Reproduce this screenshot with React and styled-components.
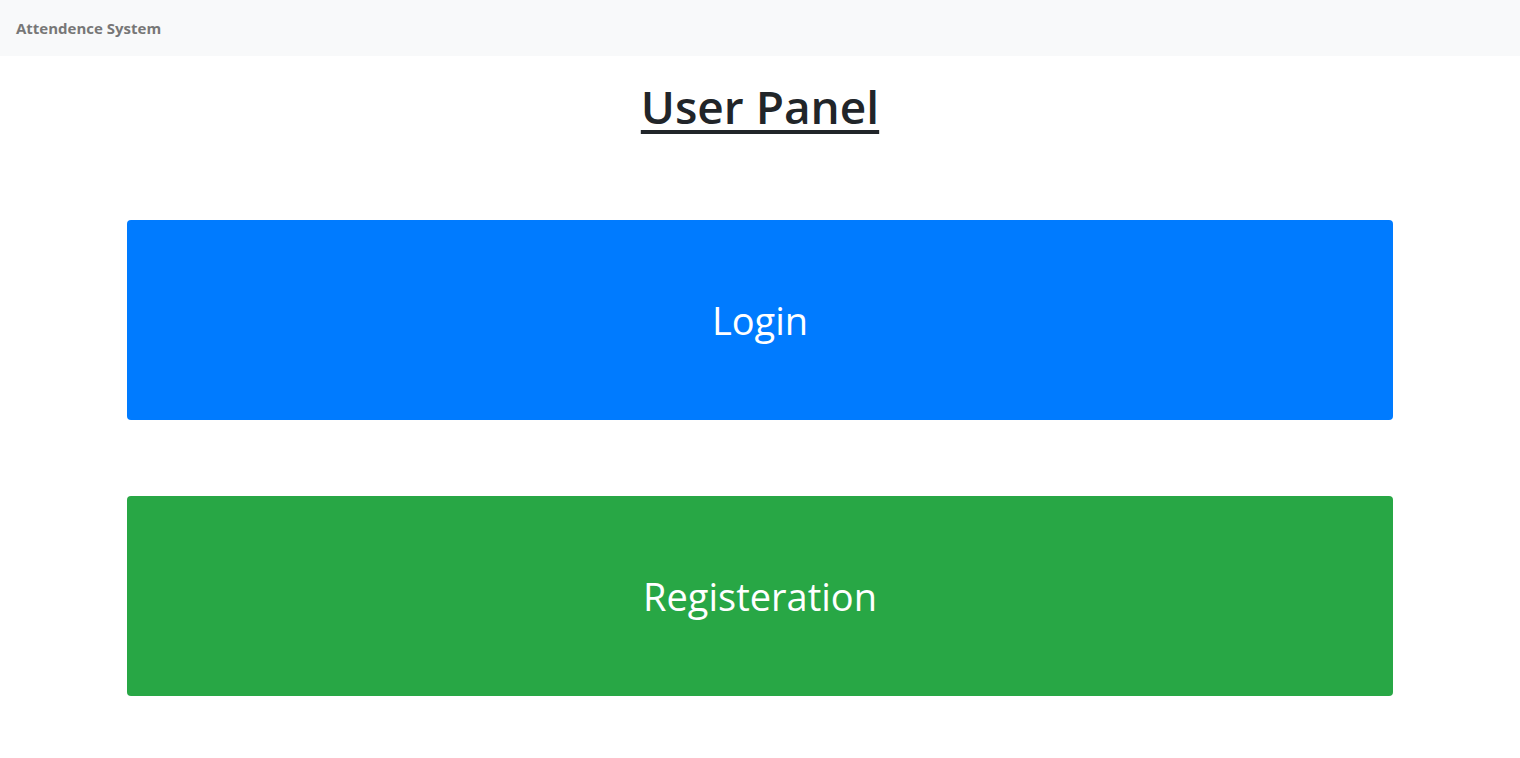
import React from 'react';
import styled, { createGlobalStyle } from 'styled-components';

const GlobalStyle = createGlobalStyle`
  body {
    margin: 0;
    font-family: "Open Sans", "Noto Sans", sans-serif;
    color: #212529;
    background: #fff;
  }
`;

const Navbar = styled.nav`
  display: flex;
  align-items: center;
  height: 56px;
  padding: 0 16px;
  background-color: #f8f9fa;
`;

const Brand = styled.span`
  font-size: 15px;
  font-weight: 700;
  color: #777777;
`;

const Main = styled.main`
  display: flex;
  flex-direction: column;
  align-items: center;
`;

const Title = styled.h1`
  margin: 23px 0 86px;
  font-size: 46px;
  font-weight: 600;
  line-height: 1.2;
  text-decoration: underline;
  text-decoration-thickness: 4px;
  text-underline-offset: 6px;
`;

const ButtonList = styled.div`
  display: flex;
  flex-direction: column;
  gap: 76px;
  width: 1266px;
`;

const BigButton = styled.button`
  height: 200px;
  border: none;
  border-radius: 4px;
  font-family: inherit;
  font-size: 38px;
  color: #fff;
  background-color: ${(p) => p.color};
  cursor: pointer;
`;

function App() {
  return (
    <>
      <GlobalStyle />
      <Navbar>
        <Brand>Attendence System</Brand>
      </Navbar>
      <Main>
        <Title>User Panel</Title>
        <ButtonList>
          <BigButton color="#007bff">Login</BigButton>
          <BigButton color="#28a745">Registeration</BigButton>
        </ButtonList>
      </Main>
    </>
  );
}

export default App;
